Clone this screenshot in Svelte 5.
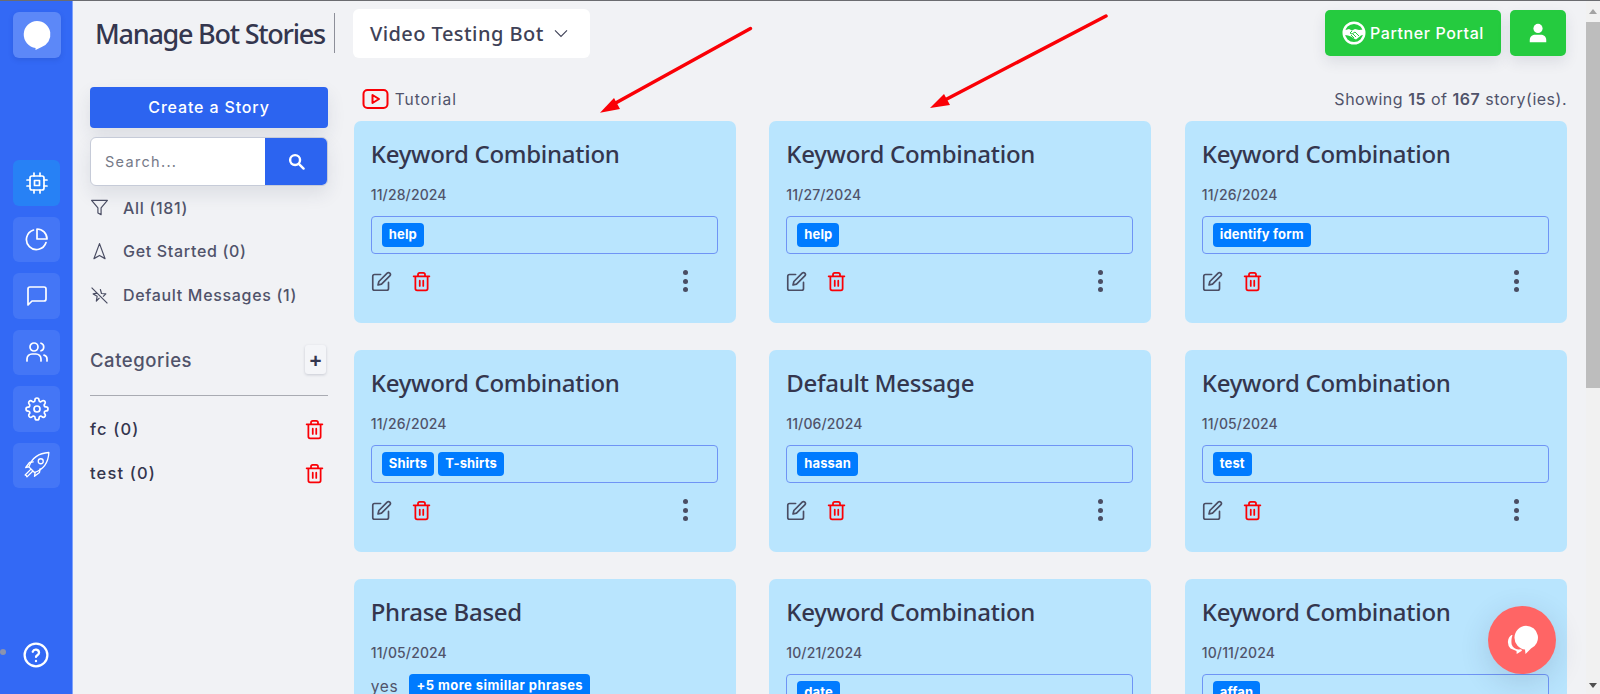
<script>
  const filters = [
    { label: 'All (181)', icon: 'filter' },
    { label: 'Get Started (0)', icon: 'nav' },
    { label: 'Default Messages (1)', icon: 'off' }
  ];
  const cats = ['fc (0)', 'test (0)'];
  const cards = [
    { t: 'Keyword Combination', d: '11/28/2024', k: ['help'] },
    { t: 'Keyword Combination', d: '11/27/2024', k: ['help'] },
    { t: 'Keyword Combination', d: '11/26/2024', k: ['identify form'] },
    { t: 'Keyword Combination', d: '11/26/2024', k: ['Shirts', 'T-shirts'] },
    { t: 'Default Message', d: '11/06/2024', k: ['hassan'] },
    { t: 'Keyword Combination', d: '11/05/2024', k: ['test'] },
    { t: 'Phrase Based', d: '11/05/2024', phrase: 'yes', more: '+5 more simillar phrases' },
    { t: 'Keyword Combination', d: '10/21/2024', k: ['date'] },
    { t: 'Keyword Combination', d: '10/11/2024', k: ['affan'] }
  ];
</script>

{#snippet trash(cls)}
  <svg class={cls} viewBox="0 0 24 24" fill="none" stroke="#fa0006" stroke-width="2" stroke-linecap="round" stroke-linejoin="round"><path d="M3 6h18M8 6V4a2 2 0 0 1 2-2h4a2 2 0 0 1 2 2v2M5 6v14a2 2 0 0 0 2 2h10a2 2 0 0 0 2-2V6M10 11v6M14 11v6"/></svg>
{/snippet}

<div class="page">
  <aside class="rail">
    <div class="tile logo">
      <svg viewBox="0 0 32 32" width="32" height="32"><path fill="#fff" d="M16 2a13.500 13.500 0 0 1 4.200 26.300L14.500 31l.1-2.100A13.500 13.500 0 0 1 16 2z"/></svg>
    </div>
    <div class="navs">
      <div class="tile active">
        <svg viewBox="0 0 24 24" class="ri"><rect x="5" y="5" width="14" height="14" rx="2"/><rect x="9.500" y="9.500" width="5" height="5"/><path d="M9 2v3M15 2v3M9 19v3M15 19v3M2 9h3M2 15h3M19 9h3M19 15h3"/></svg>
      </div>
      <div class="tile">
        <svg viewBox="0 0 24 24" class="ri"><path d="M21 15.500A10 10 0 1 1 8.500 3"/><path d="M22 12A10 10 0 0 0 12 2v10z"/></svg>
      </div>
      <div class="tile">
        <svg viewBox="0 0 24 24" class="ri"><path d="M21 15a2 2 0 0 1-2 2H7l-4 4V5a2 2 0 0 1 2-2h14a2 2 0 0 1 2 2z"/></svg>
      </div>
      <div class="tile">
        <svg viewBox="0 0 24 24" class="ri"><circle cx="9" cy="7" r="4"/><path d="M2 21v-2a5 5 0 0 1 5-5h4a5 5 0 0 1 5 5v2M16 3.200a4 4 0 0 1 0 7.600M22 21v-2a4 4 0 0 0-3-3.900"/></svg>
      </div>
      <div class="tile">
        <svg viewBox="0 0 24 24" class="ri"><circle cx="12" cy="12" r="3"/><path d="M19.400 15a1.650 1.650 0 0 0 .33 1.820l.06.06a2 2 0 1 1-2.830 2.830l-.06-.06a1.650 1.650 0 0 0-2.820 1.170V21a2 2 0 1 1-4 0v-.09A1.650 1.650 0 0 0 7.200 19.700l-.06.06a2 2 0 1 1-2.830-2.830l.06-.06a1.650 1.650 0 0 0-1.170-2.820H3a2 2 0 1 1 0-4h.09A1.650 1.650 0 0 0 4.300 7.200l-.06-.06a2 2 0 1 1 2.830-2.830l.06.06a1.650 1.650 0 0 0 2.820-1.170V3a2 2 0 1 1 4 0v.09a1.650 1.650 0 0 0 2.820 1.170l.06-.06a2 2 0 1 1 2.830 2.830l-.06.06a1.650 1.650 0 0 0 1.170 2.820H21a2 2 0 1 1 0 4h-.09a1.650 1.650 0 0 0-1.510 1z"/></svg>
      </div>
      <div class="tile">
        <svg viewBox="0 0 24 24" class="ri thin"><path d="M8 16 5.500 13.500c2-6 7-11 16-11.500-.5 9-5.500 14-11.500 16z"/><circle cx="15" cy="9" r="2"/><path d="M5.500 13.500 3 14l3-4 3-.5M10.500 18 10 21l4-3 .5-3M7 15.500 2.500 20l1 .5.5 1 4.500-4.500"/></svg>
      </div>
    </div>
    <div class="grip"></div>
    <svg viewBox="0 0 24 24" class="help"><circle cx="12" cy="12" r="10.500"/><path d="M9 9a3 3 0 0 1 5.800 1c0 2-2.800 2.300-2.800 3.800M12 17.500v.2"/></svg>
  </aside>

  <div class="main">
    <header class="top">
      <h1>Manage Bot Stories</h1>
      <span class="rule"></span>
      <button class="select">Video Testing Bot
        <svg viewBox="0 0 24 24" width="16" height="16" fill="none" stroke="#3f4257" stroke-width="1.700"><path d="m3 8 9 9 9-9"/></svg>
      </button>
      <div class="top-right">
        <button class="green partner">
          <svg viewBox="0 0 24 24" width="24" height="24" fill="none" stroke="#fff"><circle cx="12" cy="12" r="10.300" stroke-width="2.400"/><path fill="#fff" stroke="none" d="M2 9.500 7 8l3 1.500 3-1.500 4 1 5-.5v5l-3 1-5 4-2-1-3-2-3-1-3-.5z"/><path stroke="#25cb3f" stroke-width="1" d="m10 10-2 2 2 1 3-2 4 4M9 14l3 3M11 13l3 3"/></svg>
          Partner Portal
        </button>
        <button class="green user" aria-label="Profile">
          <svg viewBox="0 0 24 24" width="22" height="22" fill="#fff"><circle cx="12" cy="7" r="5"/><path d="M3 22v-2.500C3 16 6 14 9 14h6c3 0 6 2 6 5.500V22z"/></svg>
        </button>
      </div>
    </header>

    <div class="body">
      <section class="left">
        <button class="create">Create a Story</button>
        <div class="search">
          <span class="ph">Search...</span>
          <span class="sbtn">
            <svg viewBox="0 0 24 24" width="17" height="17" fill="none" stroke="#fff" stroke-width="3.400" stroke-linecap="round"><circle cx="10" cy="10" r="7"/><path d="m16 16 6 6"/></svg>
          </span>
        </div>
        <ul class="filters">
          {#each filters as f}
            <li>
              <svg viewBox="0 0 24 24" class="fi">
                {#if f.icon === 'filter'}
                  <path d="M22 3H2l8 9.500V19l4 2v-8.500z"/>
                {:else if f.icon === 'nav'}
                  <path d="M12 2 19 21l-7-4-7 4z"/>
                {:else}
                  <path d="m13 4 1.500 5.500L20 10l-3.500 3.500M12 15l-4 4 1-6-5-3 5-1M2 2l20 20"/>
                {/if}
              </svg>
              <span>{f.label}</span>
            </li>
          {/each}
        </ul>
        <div class="cat-head">
          <span>Categories</span>
          <button class="plus">+</button>
        </div>
        <ul class="cats">
          {#each cats as c}
            <li><span>{c}</span>{@render trash('tr')}</li>
          {/each}
        </ul>
      </section>

      <section class="content">
        <div class="meta">
          <div class="tut">
            <svg viewBox="0 0 26 20" width="27" height="20" fill="none" stroke="#fa0006" stroke-width="2"><rect x="1" y="1" width="24" height="18" rx="4"/><path fill="none" stroke-linejoin="round" d="M10 6v8l6.500-4z"/></svg>
            <span>Tutorial</span>
          </div>
          <div class="showing">Showing <b>15</b> of <b>167</b> story(ies).</div>
        </div>
        <div class="grid">
          {#each cards as c}
            <article class="card">
              <h2>{c.t}</h2>
              <div class="date">{c.d}</div>
              {#if c.phrase}
                <div class="phrase"><span class="yes">{c.phrase}</span><span class="tag wide">{c.more}</span></div>
              {:else}
                <div class="keys">
                  {#each c.k as k}<span class="tag">{k}</span>{/each}
                </div>
              {/if}
              <div class="actions">
                <svg viewBox="0 0 24 24" class="edit" fill="none" stroke="#4a4d63" stroke-width="1.900" stroke-linecap="round" stroke-linejoin="round"><path d="M11 4H4a2 2 0 0 0-2 2v14a2 2 0 0 0 2 2h14a2 2 0 0 0 2-2v-7"/><path d="M18.500 2.500a2.120 2.120 0 0 1 3 3L12 15l-4 1 1-4z"/></svg>
                {@render trash('tr')}
                <span class="dots"><i></i><i></i><i></i></span>
              </div>
            </article>
          {/each}
        </div>
      </section>
    </div>
  </div>

  <div class="scroll">
    <span class="up"></span>
    <span class="thumb"></span>
    <span class="down"></span>
  </div>

  <svg class="arrows" viewBox="0 0 1600 694" aria-hidden="true">
    <path d="M750.500 28.500 612 105" stroke="#fa0006" stroke-width="3.500" stroke-linecap="round"/>
    <path d="M600 112.700 614 98 620 109z" fill="#fa0006"/>
    <path d="M1106 16 943 101" stroke="#fa0006" stroke-width="3.500" stroke-linecap="round"/>
    <path d="M930 108 944 94 950 105z" fill="#fa0006"/>
  </svg>

  <div class="fab">
    <svg viewBox="0 0 34 34" width="34" height="34" fill="#fff"><path d="M21 2.700a12 12 0 0 1 5 22.900L20.500 31l-.5-4.400A12 12 0 0 1 21 2.700z"/><path d="M6.500 12a9 9 0 0 0-1 13.500l6 2.500.2 3 5.300-3.200-.8-1.500-3 .1c-3-.3-5.500-2-6.500-5-.7-3 0-7 .8-9.400z"/></svg>
  </div>
</div>

<style>
  :global(body) { margin: 0; background: #f1f2f5; }
  * { box-sizing: border-box; }
  .page {
    position: relative; display: flex; width: 1600px; height: 694px; overflow: hidden;
    border-top: 1px solid #6b6c70; background: #f1f2f5; color: #3f4257;
    font-family: Inter, "Open Sans", sans-serif;
  }
  button { font-family: inherit; border: 0; padding: 0; }
  h1, h2, ul { margin: 0; padding: 0; list-style: none; }

  .rail {
    position: relative; flex: 0 0 73px; background: #3369f5; border-right: 1px solid #7fa2fb;
    padding: 11px 0 0 13px; display: flex; flex-direction: column;
  }
  .tile {
    width: 47px; height: 45.500px; border-radius: 6px; background: #4476f6;
    display: flex; align-items: center; justify-content: center;
  }
  .logo { width: 48px; height: 46px; background: #5c88f8; box-shadow: 0 2px 5px rgba(20,50,140,.18); }
  .navs { margin-top: 102px; display: flex; flex-direction: column; gap: 11px; }
  .active { background: #2781f5; }
  .ri { width: 24px; height: 24px; fill: none; stroke: #fff; stroke-width: 1.700; stroke-linecap: round; stroke-linejoin: round; }
  .thin { width: 30px; height: 30px; stroke-width: 1.050; }
  .help { position: absolute; left: 23px; top: 641px; width: 26px; height: 26px; fill: none; stroke: #fff; stroke-width: 2.100; stroke-linecap: round; }
  .grip { position: absolute; left: 0; top: 648px; width: 6px; height: 6px; border-radius: 50%; background: #8b93ae; }

  .main { flex: 1; min-width: 0; display: flex; flex-direction: column; }
  .top { display: flex; align-items: center; height: 66px; padding: 0 20px 2px 22px; flex: none; }
  h1 { font: 500 27px "Noto Sans", sans-serif; letter-spacing: -1.250px; color: #34364e; white-space: nowrap; }
  .rule { width: 1px; height: 40px; background: #8d8f99; margin: 0 18px 0 9px; }
  .select {
    width: 237px; height: 49px; background: #fff; border-radius: 6px; display: flex; align-items: center;
    gap: 9px; padding-left: 17px; font: 500 20px "Noto Sans", sans-serif; letter-spacing: .45px; color: #3f4257;
  }
  .top-right { margin-left: auto; display: flex; gap: 9px; }
  .green { height: 46px; background: #25cb3f; border-radius: 5px; color: #fff; display: flex; align-items: center; justify-content: center; box-shadow: 0 6px 14px rgba(40,50,80,.1); }
  .partner { width: 176px; gap: 4px; font-size: 16px; font-weight: 500; letter-spacing: .6px; }
  .user { width: 56px; }

  .body { flex: 1; display: flex; min-height: 0; padding-left: 17px; }
  .left { flex: 0 0 238px; padding-top: 20px; }
  .create {
    display: block; width: 100%; height: 41px; border-radius: 4px; background: #2c64f0; color: #fff;
    font-size: 16px; font-weight: 500; letter-spacing: .85px; padding-bottom: 2px; box-shadow: 0 8px 18px rgba(40,50,80,.1);
  }
  .search {
    margin-top: 9px; height: 49px; display: flex; background: #fff; border: 1px solid #c6cbd8; border-radius: 6px;
    box-shadow: 0 8px 18px rgba(40,50,80,.1); overflow: hidden;
  }
  .ph { flex: 1; padding-left: 14px; line-height: 47px; font-size: 14.500px; letter-spacing: 1.300px; color: #767a88; }
  .sbtn { width: 62px; background: #2c64f0; display: flex; align-items: center; justify-content: center; }
  .filters { margin-top: 0; }
  .filters li { height: 44px; display: flex; align-items: center; gap: 14px; font-size: 16px; font-weight: 500; letter-spacing: .68px; color: #50536a; }
  .filters li:first-child { height: 43px; }
  .fi { width: 19px; height: 19px; fill: none; stroke: #4a4d63; stroke-width: 1.500; stroke-linejoin: round; flex: none; }
  .cat-head { margin-top: 28px; display: flex; align-items: center; justify-content: space-between; height: 29px; padding-right: 2px; font-size: 18.500px; font-weight: 500; letter-spacing: .55px; color: #50536a; }
  .plus { width: 21px; height: 29px; background: #f4f5f8; border-radius: 3px; font-size: 21px; font-weight: 600; line-height: 27px; color: #34364e; box-shadow: 0 1px 3px rgba(40,50,80,.2); }
  .cats { margin-top: 21px; border-top: 1px solid #a9abb2; padding-top: 11px; }
  .cats li { height: 44px; display: flex; align-items: center; justify-content: space-between; padding-right: 3px; font-size: 16.500px; font-weight: 500; letter-spacing: 1.150px; color: #34364e; }
  .tr { width: 21px; height: 23px; flex: none; }

  .content { flex: 1; min-width: 0; padding: 20px 19px 0 25.750px; }
  .meta { display: flex; justify-content: space-between; align-items: center; height: 24px; margin-bottom: 10px; }
  .tut { display: flex; align-items: center; gap: 6px; padding-left: 8px; font-size: 15.500px; letter-spacing: .95px; color: #50536a; }
  .showing { font-size: 16px; letter-spacing: .5px; color: #50536a; }
  .showing b { font-weight: 600; }
  .grid { display: grid; grid-template-columns: repeat(3, 382px); column-gap: 33.500px; row-gap: 27px; }
  .card { height: 202px; background: #b9e5fe; border-radius: 7px; padding: 18px 18px 0 17px; flex: none; }
  h2 { font: 500 24px/30px "Noto Sans", sans-serif; letter-spacing: -.28px; color: #34364e; white-space: nowrap; }
  .date { margin-top: 16px; font-size: 14px; font-weight: 500; line-height: 19px; color: #50536a; letter-spacing: .12px; }
  .keys { margin-top: 12px; height: 38px; border: 1px solid #6f94f5; border-radius: 4px; padding: 6px 10px; display: flex; gap: 4px; align-items: flex-start; }
  .tag { height: 24px; line-height: 23px; padding: 0 7px; background: #007bff; color: #fff; border-radius: 4px; font-size: 13px; font-weight: 700; letter-spacing: .15px; white-space: nowrap; }
  .wide { letter-spacing: .43px; }
  .phrase { margin-top: 12px; display: flex; align-items: center; gap: 11px; }
  .yes { font-size: 15.500px; letter-spacing: .7px; color: #50536a; }
  .actions { margin-top: 16px; display: flex; align-items: center; gap: 19px; position: relative; }
  .edit { width: 21px; height: 21px; }
  .dots { position: absolute; left: 312px; top: 0; display: flex; flex-direction: column; gap: 3.500px; }
  .dots i { width: 5px; height: 5px; border-radius: 50%; background: #4a4d63; }

  .scroll { flex: 0 0 14px; margin-left: 0; background: #f1f1f1; position: relative; }
  .up, .down { position: absolute; left: 3px; width: 0; height: 0; border-left: 4px solid transparent; border-right: 4px solid transparent; }
  .up { top: 8px; border-bottom: 5px solid #a3a3a3; }
  .down { bottom: 6px; border-top: 5px solid #505050; }
  .thumb { position: absolute; top: 21px; left: 0; width: 100%; height: 366px; background: #bdbdbd; }

  .arrows { position: absolute; inset: -1px 0 0 0; width: 1600px; height: 694px; pointer-events: none; }
  .fab {
    position: absolute; left: 1488px; top: 605px; width: 68px; height: 68px; border-radius: 50%;
    background: #ff6565; display: flex; align-items: center; justify-content: center;
    box-shadow: 0 8px 30px rgba(40,50,80,.16);
  }
</style>
